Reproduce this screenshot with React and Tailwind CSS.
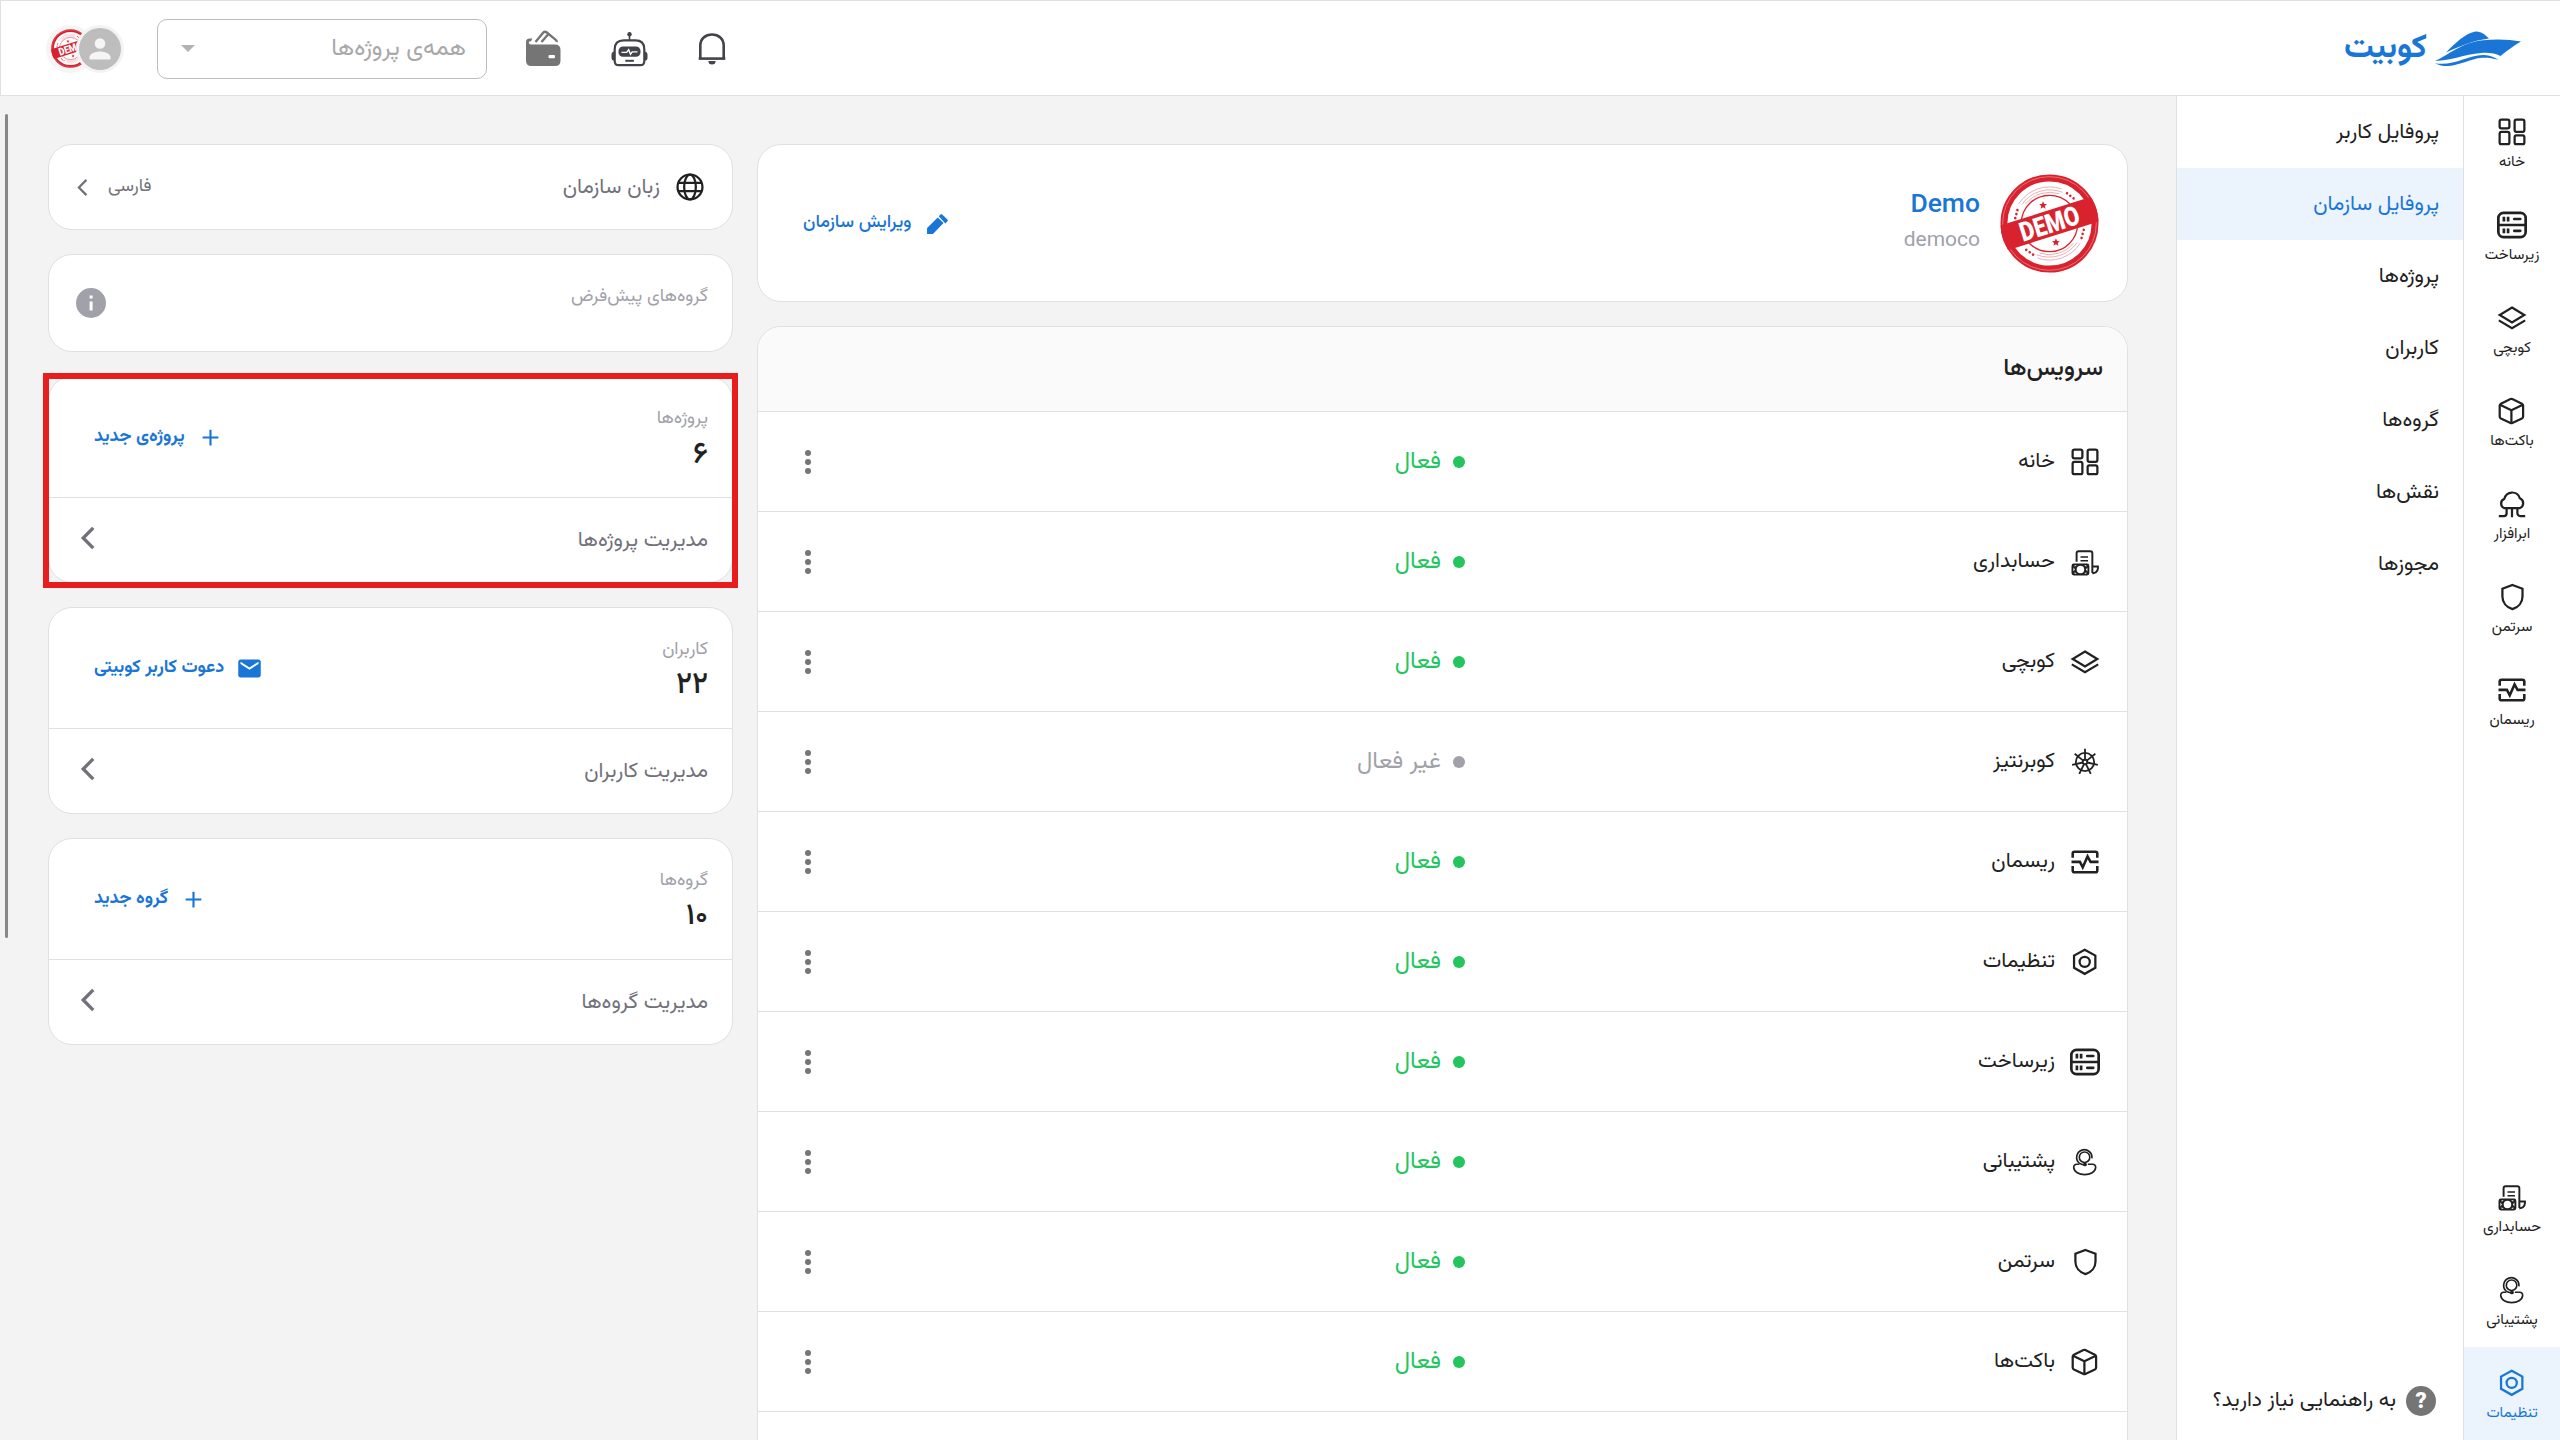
import { useId } from 'react'

function Svg({ className = 'size-9', sw = 1.5, children }) {
  return (
    <svg
      viewBox="0 0 24 24"
      className={`shrink-0 ${className}`}
      fill="none"
      stroke="currentColor"
      strokeWidth={sw}
      strokeLinecap="butt"
      strokeLinejoin="round"
    >
      {children}
    </svg>
  )
}

const HomeIcon = () => (
  <Svg>
    <rect x="3.75" y="3.75" width="6.5" height="5.8" rx="1.2" />
    <rect x="13.75" y="3.75" width="6.5" height="8.1" rx="1.2" />
    <rect x="3.75" y="11.95" width="6.5" height="8.2" rx="1.2" />
    <rect x="13.75" y="14.25" width="6.5" height="5.9" rx="1.2" />
  </Svg>
)

const ServerIcon = () => (
  <Svg sw={1.8}>
    <rect x="2.9" y="3.9" width="18.2" height="16.2" rx="3.4" />
    <path d="M3 12h18M6.6 6.5v3.2M9.4 6.5v3.2M6.6 14.3v3.2M9.4 14.3v3.2" />
    <path d="M13.5 8h4M13.5 15.9h4" strokeLinecap="round" />
  </Svg>
)

const LayersIcon = () => (
  <Svg>
    <path d="M12 5 20.2 10 12 15 3.8 10Z" strokeLinejoin="miter" />
    <path d="M3.2 13.6 12 18.8 20.8 13.6" strokeLinejoin="miter" />
  </Svg>
)

const BoxIcon = () => (
  <Svg>
    <path d="M11 4 4.6 7.1q-.8.4-.8 1.3v7.3q0 .9.8 1.3L11 20q.6.3 1.2 0l6.4-3q.8-.4.8-1.3V8.4q0-.9-.8-1.3L12.2 4q-.6-.3-1.2 0Z" />
    <path d="M4 7.9 11.6 11.5 19.2 7.9M11.6 11.5v8.5" />
  </Svg>
)

const CloudIcon = () => (
  <Svg>
    <path d="M6.7 14.7a3.3 3.3 0 0 1 .2-6.1 5.3 5.3 0 0 1 10.3-.4 3.5 3.5 0 0 1 .1 6.5Z" />
    <path d="M8.4 14.8v3.4a1.9 1.9 0 0 1-1.9 1.9H3.2M12 14.8v6M15.6 14.8v3.4a1.9 1.9 0 0 0 1.9 1.9h3.3" />
  </Svg>
)

const ShieldIcon = () => (
  <Svg>
    <path
      d="M12.3 4 19 6.5v5.1c0 3.9-2.7 7.2-6.7 8.5-4-1.3-6.7-4.6-6.7-8.5V6.500Z"
      strokeLinejoin="miter"
    />
  </Svg>
)

const PulseIcon = () => (
  <Svg sw={1.7}>
    <path d="M3.8 9.2V6.300q0-1.200 1.200-1.200h14q1.200 0 1.200 1.200v2.900M3.800 14.700v2.900q0 1.200 1.200 1.200h14q1.200 0 1.200-1.200v-2.900" />
    <path d="M3 11.900h5.600l1.900 3.600 3.200-7.200 2 3.600H21" strokeLinejoin="miter" />
  </Svg>
)

const InvoiceIcon = () => (
  <Svg sw={1.3}>
    <path d="M6.400 11.800V6.200q0-1.400 1.400-1.400h7.700q1.400 0 1.400 1.400v13.200" />
    <path d="M9 8.600h5M9 11.200h5" strokeWidth="1" />
    <path d="M16.900 15h3.700v1.300a3.400 3.400 0 0 1-3.700 3.200" strokeLinejoin="miter" />
    <rect x="3" y="13" width="11.900" height="8" rx="1.600" fill="currentColor" stroke="none" />
    <circle cx="8.950" cy="17" r="2.500" fill="#fff" stroke="none" />
    <path d="M4.300 15.600v2.800l1-1.400ZM13.600 15.600v2.800l-1-1.400ZM5 14.200h1.500l-1.400 1ZM11.400 14.200h1.500v1ZM5 19.800h1.500l-1.400-1ZM11.400 19.800h1.500v-1Z" fill="#fff" stroke="none" />
  </Svg>
)

const SupportIcon = () => (
  <Svg sw={1.1}>
    <circle cx="11.700" cy="8.800" r="3.500" />
    <path d="M16.600 9.600a5.100 5.100 0 1 0-8.700 2.900q1.500 1.300 3.800 1.400" />
    <path d="M8.300 13.500H6.500c-1.400 0-2.100.9-2 2.300.3 2.900 3.500 4.600 7.300 4.600s7-1.700 7.300-4.600c.1-1.400-.6-2.300-2-2.300h-3.200" />
    <circle cx="12" cy="13.600" r=".7" fill="currentColor" />
  </Svg>
)

const SettingsIcon = () => (
  <Svg>
    <path d="M11.800 3.800 18.900 7.700v8.200l-7.100 4-7.100-4V7.700Z" strokeLinejoin="miter" />
    <circle cx="11.800" cy="11.900" r="3.400" />
  </Svg>
)

const HelmIcon = () => (
  <Svg sw={1.2}>
    <circle cx="12" cy="12" r="6.100" />
    <circle cx="12" cy="12" r="1.500" />
    {[0, 1, 2, 3, 4, 5, 6].map((i) => (
      <path key={i} d="M12 10.500V3.200" transform={`rotate(${(i * 360) / 7} 12 12)`} />
    ))}
  </Svg>
)

const GlobeIcon = () => (
  <Svg sw={1.5}>
    <circle cx="12" cy="12" r="8.300" />
    <ellipse cx="12" cy="12" rx="3.900" ry="8.300" />
    <path d="M4.200 9.200h15.600M4.200 14.800h15.600" />
  </Svg>
)

const ChevronLeft = ({ className, sw }) => (
  <Svg className={className} sw={sw}>
    <path d="M15.500 5.200 8.800 12l6.700 6.800" strokeLinejoin="miter" />
  </Svg>
)

const PlusIcon = () => (
  <Svg className="size-[27px]" sw={1.9}>
    <path d="M12 5v14M5 12h14" />
  </Svg>
)

const MailIcon = () => (
  <svg viewBox="0 0 24 24" className="size-[27px] shrink-0" fill="currentColor">
    <path d="M20 4H4c-1.100 0-2 .9-2 2v12c0 1.100.9 2 2 2h16c1.100 0 2-.9 2-2V6c0-1.100-.9-2-2-2Zm0 4-8 5-8-5V6l8 5 8-5Z" />
  </svg>
)

const PencilIcon = () => (
  <svg viewBox="0 0 24 24" className="size-[27px] shrink-0" fill="currentColor">
    <path d="M2.700 21.300V16.700q0-.6.500-1.100l9-9 5.200 4.900-9 9.300q-.5.500-1.100.5ZM13.100 5.600l1.500-1.500q.8-.8 1.600 0l4.600 4.300q.8.800 0 1.600l-1.800 1.900Z" />
  </svg>
)

const BellIcon = () => (
  <svg viewBox="0 0 28 34" className="h-[34px] w-7" fill="none" stroke="currentColor" strokeWidth="2.600">
    <path d="M2.300 26.500V13.500C2.300 6.800 7.500 2.500 14 2.500S25.700 6.800 25.700 13.500v13" />
    <path d="M.7 26.600h26.600" />
    <path d="M10.400 29h7.200a3.600 3.600 0 0 1-7.200 0Z" fill="currentColor" stroke="none" />
  </svg>
)

const RobotIcon = () => (
  <svg viewBox="0 0 37 36" className="h-9 w-[37px]" fill="none" stroke="currentColor" strokeWidth="2.200">
    <circle cx="18.500" cy="3.300" r="2.200" fill="currentColor" stroke="none" />
    <path d="M18.500 4v5" strokeWidth="1.600" />
    <path d="M3.700 30.200V18.200q0-8.800 8.800-8.800h12q8.800 0 8.800 8.800v12q0 4-4 4H7.700q-4 0-4-4Z" />
    <path d="M3.400 20.500q-2.900.4-2.900 3.400v3.200q0 2.400 2.900 2.700ZM33.600 20.500q2.900.4 2.900 3.400v3.200q0 2.400-2.900 2.700Z" fill="currentColor" stroke="none" />
    <rect x="7.500" y="15.500" width="22" height="10.300" rx="4.500" fill="currentColor" stroke="none" />
    <path d="M10.500 21.400h5.200l2-2.700 1.800 4.600 1.700-2.400h5.300" stroke="#fff" strokeWidth="1.400" />
    <path d="M14.300 29.800h8.600" strokeWidth="2" />
  </svg>
)

const WalletIcon = () => (
  <svg viewBox="0 0 35 37" className="h-[37px] w-[35px]" fill="none">
    <path d="M0 14.500V12q0-3.500 3.500-3.500H6.500L5 11.200q-2.200 0-2.200 1.400 0 1.900 2.300 1.900H29q5.500 0 5.500 5.500v10.500q0 5.500-5.500 5.500H5.500Q0 36 0 30.500Z" fill="currentColor" />
    <rect x="22.500" y="25" width="6.500" height="3.300" rx="1" fill="#fff" />
    <path d="M9.500 12 17.300 2.500q1.500-1.500 3.200-.2l9 7.300q1.500 1.200 1 2.400M15.500 12l6.300-7.200" stroke="currentColor" strokeWidth="2.400" />
  </svg>
)

const Kebab = () => (
  <svg viewBox="0 0 36 36" className="size-9" fill="#757575">
    <circle cx="18" cy="9" r="3" />
    <circle cx="18" cy="18" r="3" />
    <circle cx="18" cy="27" r="3" />
  </svg>
)

const Boat = () => (
  <svg viewBox="0 0 86 37" className="h-[37px] w-[86px]" fill="#1976d6">
    <path d="M11 21.500C20 12 31 2 39.500.7 46-.2 50 4 54 7.600 38 9.500 26 15 11 21.500Z" />
    <path d="M0 30C14 24 26 11.500 48 9.300 62 8 75 8.500 86 10.600 78 15 71.500 20.500 65.500 25 60 22.500 54 21.300 46 22 29 23.500 16 29.500 0 30Z" />
    <path d="M0 32.200C18 35.500 32 24.500 48 24c6.500-.2 11 2 15.500 4.800C57 27 52 26.500 47 26.800 32 28 16 40.500 0 32.200Z" />
  </svg>
)

const Dots = ({ x, y, r }) => (
  <g transform={`translate(${x} ${y}) rotate(${r})`} fill="#d8232f">
    <circle cx="-4.200" r="1.300" />
    <circle r="1.300" />
    <circle cx="4.200" r="1.300" />
  </g>
)

function Stamp({ className }) {
  const id = useId()
  const star = 'M0-4 1.200-1.300 4-1.100 1.800.7 2.500 3.500 0 2-2.500 3.500-1.800.7-4-1.100-1.200-1.300Z'
  return (
    <svg viewBox="0 0 100 100" className={className}>
      <clipPath id={id}>
        <circle cx="50" cy="50" r="49.500" />
      </clipPath>
      <circle cx="50" cy="50" r="49.500" fill="#fff" />
      <circle cx="50" cy="50" r="46" fill="none" stroke="#d8232f" strokeWidth="7" />
      <circle cx="50" cy="50" r="47.300" fill="none" stroke="#f0a0a5" strokeWidth=".6" />
      <circle cx="50" cy="50" r="28.500" fill="none" stroke="#d8232f" strokeWidth="1.300" />
      <g fill="none" stroke="#e58a90" strokeWidth=".7">
        <path d="M19 30A37 37 0 0 1 62 15M22 31A34 34 0 0 1 63 18.500M26 30A31.500 31.500 0 0 1 60 20" />
        <path d="M81 70A37 37 0 0 1 38 85M78 69A34 34 0 0 1 37 81.500M74 70A31.500 31.500 0 0 1 40 80" />
      </g>
      <path d={star} fill="#d8232f" transform="translate(43.500 31.500)" />
      <path d={star} fill="#d8232f" transform="translate(56.500 69)" />
      <Dots x={71} y={22} r={38} />
      <Dots x={16.5} y={40.5} r={-75} />
      <Dots x={83.5} y={60.5} r={-75} />
      <Dots x={30} y={79} r={35} />
      <g clipPath={`url(#${id})`}>
        <g transform="rotate(-17.500 50 50)">
          <rect x="-5" y="37" width="110" height="26" fill="#d8232f" />
          <text
            x="50"
            y="59.500"
            textAnchor="middle"
            textLength="62"
            lengthAdjust="spacingAndGlyphs"
            direction="ltr"
            className="fill-white font-['Roboto'] text-[27px] font-black"
          >
            DEMO
          </text>
        </g>
      </g>
    </svg>
  )
}

const railTop = [
  ['خانه', HomeIcon],
  ['زیرساخت', ServerIcon],
  ['کوبچی', LayersIcon],
  ['باکت‌ها', BoxIcon],
  ['ابرافزار', CloudIcon],
  ['سرتمن', ShieldIcon],
  ['ریسمان', PulseIcon],
]

const railBottom = [
  ['حسابداری', InvoiceIcon],
  ['پشتیبانی', SupportIcon],
  ['تنظیمات', SettingsIcon, true],
]

const menu = ['پروفایل کاربر', 'پروفایل سازمان', 'پروژه‌ها', 'کاربران', 'گروه‌ها', 'نقش‌ها', 'مجوزها']

const services = [
  ['خانه', HomeIcon, true],
  ['حسابداری', InvoiceIcon, true],
  ['کوبچی', LayersIcon, true],
  ['کوبرنتیز', HelmIcon, false],
  ['ریسمان', PulseIcon, true],
  ['تنظیمات', SettingsIcon, true],
  ['زیرساخت', ServerIcon, true],
  ['پشتیبانی', SupportIcon, true],
  ['سرتمن', ShieldIcon, true],
  ['باکت‌ها', BoxIcon, true],
]

function RailItem({ label, Icon, active }) {
  return (
    <a className={`flex h-[93px] flex-col items-center pt-[18px] ${active ? 'bg-[#ebf3fc] text-[#1976d6]' : ''}`}>
      <Icon />
      <span className="mt-0.5 text-[15px] leading-[22px] whitespace-nowrap">{label}</span>
    </a>
  )
}

function Header() {
  return (
    <header className="flex h-24 shrink-0 items-center justify-between border-y border-l border-[#e0e0e0] bg-white pr-[39px] pl-[45px]">
      <div className="flex items-center gap-2 pt-0.5 text-[#1976d6]">
        <Boat />
        <span className="text-[33px] leading-10 font-bold">کوبیت</span>
      </div>
      <div className="flex items-center pt-px">
        <div className="flex items-center gap-[50px] text-[#43434c]">
          <BellIcon />
          <RobotIcon />
          <span className="text-[#757575]">
            <WalletIcon />
          </span>
        </div>
        <div className="mr-[39px] flex h-[60px] w-[330px] items-center justify-between rounded-[10px] border border-[#bdbdbd] pr-5 pl-[23px] text-2xl text-[#a8a8a8]">
          همه‌ی پروژه‌ها
          <svg viewBox="0 0 14 7" className="h-[7px] w-3.5" fill="#b3b3b3">
            <path d="M0 0h14L7 7Z" />
          </svg>
        </div>
        <div className="mr-[33px] flex items-center">
          <span className="z-10 flex size-12 items-center justify-center rounded-full bg-[#f3f3f3]">
            <svg viewBox="0 0 42 42" className="size-[42px]">
              <circle cx="21" cy="21" r="21" fill="#bdbdbd" />
              <circle cx="21" cy="15.500" r="5.300" fill="#f5f5f5" />
              <path d="M10.500 31.500v-2.300c0-3.600 6-5.700 10.500-5.700s10.500 2.100 10.500 5.700v2.300Z" fill="#f5f5f5" />
            </svg>
          </span>
          <span className="-mr-[18px] flex size-12 items-center justify-center rounded-full bg-[#f5f5f5]">
            <Stamp className="size-[39px]" />
          </span>
        </div>
      </div>
    </header>
  )
}

function Card({ className = '', children }) {
  return <section className={`rounded-3xl border border-[#e0e0e0] bg-white ${className}`}>{children}</section>
}

function CountCard({ label, count, action, Icon, manage, highlighted }) {
  return (
    <Card className="relative h-[207px] shrink-0">
      <div className="flex h-[121px] items-center justify-between border-b border-[#e0e0e0] pr-6 pl-[45px]">
        <div className="flex flex-col pt-2">
          <span className="text-lg leading-7 text-[#a1a1aa]">{label}</span>
          <span className="text-[30px] leading-[44px] font-medium text-[#212121]">{count}</span>
        </div>
        <a className="flex items-center gap-3 text-lg font-bold text-[#1976d6]">
          <Icon />
          {action}
        </a>
      </div>
      <a className="flex h-[84px] items-center justify-between pt-0.5 pr-6 pl-[21px] text-[21.15px] text-[#71717a]">
        {manage}
        <span className="-mt-1.5">
          <ChevronLeft className="size-9" sw={2.2} />
        </span>
      </a>
      {highlighted && (
        <div className="absolute -top-[4px] -right-[6px] -bottom-[6px] -left-[6px] border-[6px] border-[#e81e1e]" />
      )}
    </Card>
  )
}

export default function App() {
  return (
    <div
      dir="rtl"
      className="relative flex h-[1440px] w-[2560px] flex-col overflow-hidden bg-[#f3f3f3] font-['Vazirmatn','Roboto','Noto_Sans_Arabic',sans-serif] text-[#212121]"
    >
      <Header />
      <div className="flex min-h-0 flex-1">
        <nav className="flex w-[97px] shrink-0 flex-col justify-between border-l border-[#e0e0e0] bg-white">
          <div>
            {railTop.map(([label, Icon]) => (
              <RailItem key={label} label={label} Icon={Icon} />
            ))}
          </div>
          <div>
            {railBottom.map(([label, Icon, active]) => (
              <RailItem key={label} label={label} Icon={Icon} active={active} />
            ))}
          </div>
        </nav>

        <aside className="flex w-[287px] shrink-0 flex-col justify-between border-l border-[#e0e0e0] bg-white text-[21.15px]">
          <div>
            {menu.map((label, i) => (
              <a
                key={label}
                className={`flex h-[72px] items-center pt-0.5 pr-6 ${i === 1 ? 'bg-[#ebf3fc] text-[#1976d6]' : ''}`}
              >
                {label}
              </a>
            ))}
          </div>
          <a className="flex h-[78px] items-center gap-2.5 pr-[27px]">
            <span className="flex size-[30px] items-center justify-center rounded-full bg-[#757575] font-['Roboto'] text-[22px] leading-none font-black text-white">
              ?
            </span>
            به راهنمایی نیاز دارید؟
          </a>
        </aside>

        <main className="flex flex-1 gap-6 px-12 pt-12">
          <div className="flex w-[1371px] shrink-0 flex-col gap-6">
            <Card className="flex h-[158px] shrink-0 items-center justify-between pr-7 pl-[45px]">
              <div className="flex items-center gap-5">
                <Stamp className="size-[99px]" />
                <div className="flex flex-col items-start pb-1 font-['Roboto'] whitespace-nowrap">
                  <span className="text-[26.5px] leading-9 font-medium text-[#1976d6]">Demo</span>
                  <span className="text-[21px] leading-[37px] text-[#a1a1aa]">democo</span>
                </div>
              </div>
              <a className="flex items-center gap-3 text-lg font-medium text-[#1976d6]">
                <PencilIcon />
                ویرایش سازمان
              </a>
            </Card>

            <Card className="h-[1200px] shrink-0 overflow-hidden">
              <h2 className="flex h-[85px] items-center border-b border-[#e0e0e0] bg-[#fafafa] pr-6 text-2xl font-medium">
                سرویس‌ها
              </h2>
              {services.map(([label, Icon, on]) => (
                <div key={label} className="flex h-[100px] items-center border-b border-[#e0e0e0] pl-8">
                  <div className="flex w-[662px] items-center gap-3 pr-6 text-[21.15px]">
                    <Icon />
                    {label}
                  </div>
                  <div className={`flex flex-1 items-center gap-3 text-2xl ${on ? 'text-[#22c55e]' : 'text-[#a1a1aa]'}`}>
                    <span className="size-3 rounded-full bg-current" />
                    {on ? 'فعال' : 'غیر فعال'}
                  </div>
                  <Kebab />
                </div>
              ))}
            </Card>
          </div>

          <div className="flex w-[685px] shrink-0 flex-col gap-6">
            <Card className="flex h-[86px] shrink-0 items-center justify-between pr-6 pl-5 text-[#71717a]">
              <div className="flex items-center gap-3 text-[21.15px]">
                <span className="text-[#212121]">
                  <GlobeIcon />
                </span>
                <span className="pt-0.5">زبان سازمان</span>
              </div>
              <div className="flex items-center gap-4 text-lg">
                <span className="-ml-0.5">فارسی</span>
                <span className="-mr-0.5">
                  <ChevronLeft className="size-[27px]" sw={2} />
                </span>
              </div>
            </Card>

            <Card className="flex h-[98px] shrink-0 items-center justify-between pr-6 pl-[27px]">
              <span className="mb-3 text-lg text-[#a1a1aa]">گروه‌های پیش‌فرض</span>
              <svg viewBox="0 0 30 30" className="size-[30px]">
                <circle cx="15" cy="15" r="15" fill="#a1a1aa" />
                <path d="M13.600 13.500h3v9h-3ZM13.600 7.500h3v3h-3Z" fill="#fff" />
              </svg>
            </Card>

            <CountCard
              label="پروژه‌ها"
              count="۶"
              action="پروژه‌ی جدید"
              Icon={PlusIcon}
              manage="مدیریت پروژه‌ها"
              highlighted
            />
            <CountCard
              label="کاربران"
              count="۲۲"
              action="دعوت کاربر کوبیتی"
              Icon={MailIcon}
              manage="مدیریت کاربران"
            />
            <CountCard
              label="گروه‌ها"
              count="۱۰"
              action="گروه جدید"
              Icon={PlusIcon}
              manage="مدیریت گروه‌ها"
            />
          </div>
        </main>
      </div>
      <div className="absolute top-[114px] left-[5px] h-[824px] w-[3px] rounded-full bg-[#888]" />
    </div>
  )
}
